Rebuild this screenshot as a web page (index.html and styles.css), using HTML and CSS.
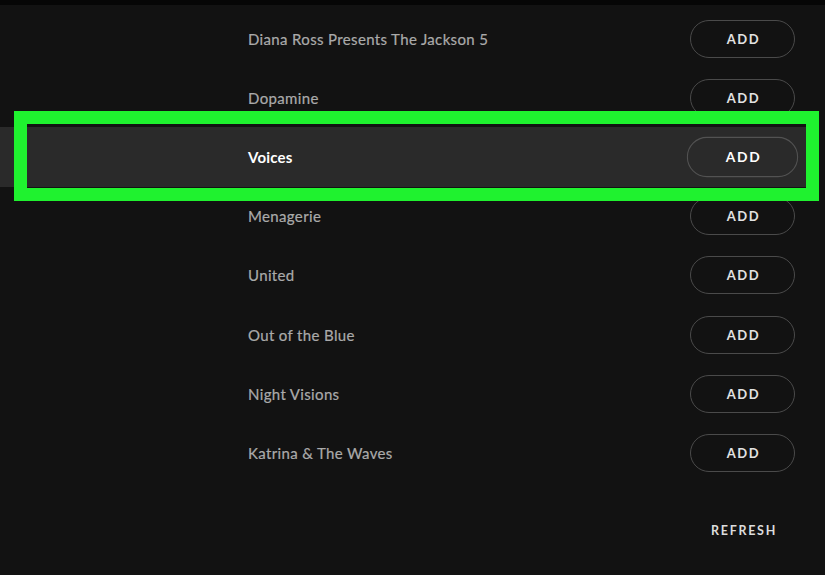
FILE: index.html
```html
<!DOCTYPE html>
<html lang="en">
<head>
<meta charset="utf-8">
<title>Recommended albums</title>
<link rel="stylesheet" href="styles.css">
</head>
<body>
<div class="topbar"></div>
<main class="page">
  <ul class="list">
    <li class="row"><span class="title">Diana Ross Presents The Jackson 5</span><button class="add">ADD</button></li>
    <li class="row"><span class="title">Dopamine</span><button class="add">ADD</button></li>
    <li class="row active"><span class="title">Voices</span><button class="add">ADD</button></li>
    <li class="row"><span class="title">Menagerie</span><button class="add">ADD</button></li>
    <li class="row"><span class="title">United</span><button class="add">ADD</button></li>
    <li class="row"><span class="title">Out of the Blue</span><button class="add">ADD</button></li>
    <li class="row"><span class="title">Night Visions</span><button class="add">ADD</button></li>
    <li class="row"><span class="title">Katrina &amp; The Waves</span><button class="add">ADD</button></li>
  </ul>
  <div class="footer"><button class="refresh">REFRESH</button></div>
  <div class="highlight-frame"></div>
</main>
</body>
</html>
```
FILE: styles.css
```css
html, body {
  margin: 0;
  padding: 0;
  background: #121212;
  height: 100%;
  overflow: hidden;
}
body {
  font-family: Lato, "Noto Sans", sans-serif;
  color: #a7a7a7;
}
.topbar {
  height: 5px;
  background: #060606;
}
.page {
  position: relative;
  width: 812px;
  padding-top: 4px;
}
.list {
  list-style: none;
  margin: 0;
  padding: 0;
}
.row {
  height: 59.2px;
  display: flex;
  align-items: center;
  justify-content: space-between;
  padding: 0 17px 0 248px;
}
.row.active {
  background: #2a2a2a;
}
.title {
  font-size: 15px;
  font-weight: 400;
  letter-spacing: 0.35px;
  color: #aaaaaa;
  -webkit-text-stroke: 0.2px #aaaaaa;
}
.row.active .title {
  color: #ffffff;
  font-weight: 700;
  letter-spacing: 0.2px;
  -webkit-text-stroke: 0;
}
.add {
  width: 105px;
  height: 38px;
  border: 1.5px solid #4a4a4a;
  border-radius: 19px;
  background: transparent;
  color: #e2e2e2;
  font-family: Lato, "Noto Sans", sans-serif;
  font-weight: 700;
  font-size: 13px;
  letter-spacing: 1.6px;
  padding: 0 0 0 2px;
  cursor: pointer;
}
.row.active .add {
  transform: scale(1.06);
  color: #ffffff;
  border-color: #525252;
}
.footer {
  display: flex;
  justify-content: flex-end;
  padding: 40px 35px 0 0;
}
.refresh {
  background: none;
  border: 0;
  padding: 0;
  color: #dcdcdc;
  font-family: Lato, "Noto Sans", sans-serif;
  font-weight: 700;
  font-size: 12.5px;
  letter-spacing: 1.7px;
  line-height: 16px;
}
.highlight-frame {
  position: absolute;
  left: 14px;
  top: 106px;
  width: 779px;
  height: 64px;
  border: 13px solid #1ff22f;
  pointer-events: none;
}
```
